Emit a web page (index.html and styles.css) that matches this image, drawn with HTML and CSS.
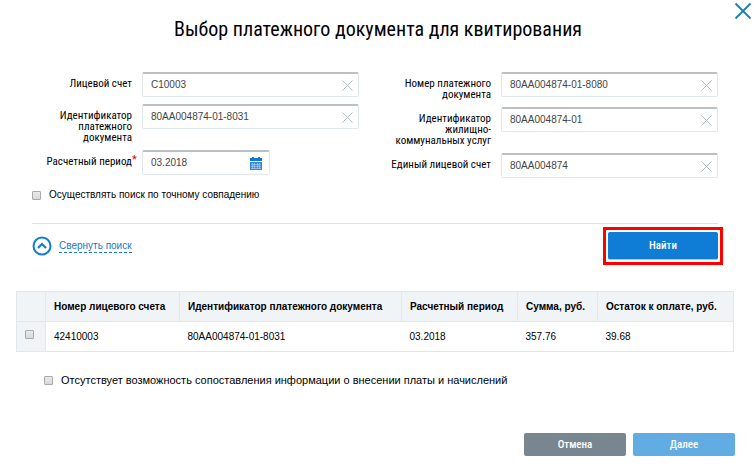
FILE: index.html
```html
<!DOCTYPE html>
<html lang="ru">
<head>
  <meta charset="UTF-8">
  <meta name="viewport" content="width=device-width, initial-scale=1.0">
  <title>Выбор платежного документа для квитирования</title>
  <link rel="stylesheet" href="styles.css">
</head>
<body>
<div class="dialog">
  <header class="dialog-header">
    <h1>Выбор платежного документа для квитирования</h1>
    <button type="button" class="dialog-close" aria-label="Закрыть">
      <svg width="18" height="18" viewBox="0 0 18 18"><path d="M1.500 1.500L16.500 16.500M16.500 1.500L1.500 16.500" stroke="#1b7db5" stroke-width="1.800" fill="none"/></svg>
    </button>
  </header>

  <form class="search">
    <div class="fields">
      <div class="fields-col">
        <div class="field">
          <label for="account">Лицевой счет</label>
          <div class="box">
            <input type="text" id="account" value="C10003">
            <button type="button" class="clear" aria-label="Очистить"><svg width="11" height="11" viewBox="0 0 11 11"><path d="M.5.5l10 10M10.500.5l-10 10"/></svg></button>
          </div>
        </div>
        <div class="field">
          <label for="docId">Идентификатор платежного документа</label>
          <div class="box">
            <input type="text" id="docId" value="80AA004874-01-8031">
            <button type="button" class="clear" aria-label="Очистить"><svg width="11" height="11" viewBox="0 0 11 11"><path d="M.5.5l10 10M10.500.5l-10 10"/></svg></button>
          </div>
        </div>
        <div class="field">
          <label for="period" class="required">Расчетный период</label>
          <div class="box box-date">
            <input type="text" id="period" value="03.2018">
            <button type="button" class="calendar" aria-label="Календарь">
              <svg width="12" height="13" viewBox="0 0 12 13">
                <path d="M0 1h12v3H0zM2 0h2v1H2zM8 0h2v1H8z" fill="#1277cf"/>
                <path d="M0 5h12v8H0z" fill="#2f87d6"/>
                <path d="M1 7.500h10M1 9.500h10M1 11.500h10M2.500 6v6M4.500 6v6M7.500 6v6M9.500 6v6" stroke="#a9cff0" stroke-width=".7"/>
              </svg>
            </button>
          </div>
        </div>
      </div>

      <div class="fields-col">
        <div class="field">
          <label for="docNum">Номер платежного документа</label>
          <div class="box">
            <input type="text" id="docNum" value="80AA004874-01-8080">
            <button type="button" class="clear" aria-label="Очистить"><svg width="11" height="11" viewBox="0 0 11 11"><path d="M.5.5l10 10M10.500.5l-10 10"/></svg></button>
          </div>
        </div>
        <div class="field">
          <label for="serviceId">Идентификатор жилищно-коммунальных услуг</label>
          <div class="box">
            <input type="text" id="serviceId" value="80AA004874-01">
            <button type="button" class="clear" aria-label="Очистить"><svg width="11" height="11" viewBox="0 0 11 11"><path d="M.5.5l10 10M10.500.5l-10 10"/></svg></button>
          </div>
        </div>
        <div class="field">
          <label for="unified">Единый лицевой счет</label>
          <div class="box">
            <input type="text" id="unified" value="80AA004874">
            <button type="button" class="clear" aria-label="Очистить"><svg width="11" height="11" viewBox="0 0 11 11"><path d="M.5.5l10 10M10.500.5l-10 10"/></svg></button>
          </div>
        </div>
      </div>
    </div>

    <div class="exact">
      <input type="checkbox" id="exact">
      <label for="exact">Осуществлять поиск по точному совпадению</label>
    </div>

    <div class="search-footer">
      <a href="#" class="collapse">
        <svg width="20" height="20" viewBox="0 0 20 20" fill="none" stroke="#0f7cd6"><circle cx="10" cy="10" r="8.500" stroke-width="2"/><path d="M6 12l4-4 4 4" stroke-width="2.200"/></svg>
        <span>Свернуть поиск</span>
      </a>
      <div class="highlight">
        <button type="submit" class="btn btn-find">Найти</button>
      </div>
    </div>
  </form>

  <table class="results">
    <colgroup>
      <col class="c-check"><col class="c-account"><col class="c-doc"><col class="c-period"><col class="c-sum"><col class="c-rest">
    </colgroup>
    <thead>
      <tr>
        <th></th>
        <th>Номер лицевого счета</th>
        <th>Идентификатор платежного документа</th>
        <th>Расчетный период</th>
        <th>Сумма, руб.</th>
        <th>Остаток к оплате, руб.</th>
      </tr>
    </thead>
    <tbody>
      <tr>
        <td class="check"><input type="checkbox" aria-label="Выбрать документ"></td>
        <td>42410003</td>
        <td>80AA004874-01-8031</td>
        <td>03.2018</td>
        <td>357.76</td>
        <td>39.68</td>
      </tr>
    </tbody>
  </table>

  <div class="no-match">
    <input type="checkbox" id="noMatch">
    <label for="noMatch">Отсутствует возможность сопоставления информации о внесении платы и начислений</label>
  </div>

  <footer class="actions">
    <button type="button" class="btn btn-cancel">Отмена</button>
    <button type="button" class="btn btn-next">Далее</button>
  </footer>
</div>
</body>
</html>
```
FILE: styles.css
```css
* {
  box-sizing: border-box;
}

body {
  margin: 0;
  background: #fff;
  color: #000;
  font: 10px/12px "Liberation Sans", Arial, sans-serif;
}

button {
  padding: 0;
  border: 0;
  background: none;
  cursor: pointer;
}

svg {
  display: block;
}

input[type="checkbox"] {
  appearance: none;
  flex: none;
  width: 9px;
  height: 9px;
  margin: 0;
  border: 1px solid #a9a9a9;
  border-radius: 1px;
  background: linear-gradient(#e9e9e9, #d9d9d9);
}

input[type="checkbox"]:checked {
  background: #0f7cd6;
}

.dialog-header {
  position: relative;
  padding: 16px 32px 0;
}

h1 {
  margin: 0;
  font: 400 20px/26px "Roboto Condensed", Roboto, sans-serif;
  text-align: center;
}

.dialog-close {
  position: absolute;
  top: 2px;
  right: 4px;
}

/* search form */
.search {
  padding: 30px 38px 0 32px;
}

.fields {
  display: grid;
  grid-template-columns: 1fr 1fr;
  gap: 32px;
}

.fields-col {
  display: flex;
  flex-direction: column;
  gap: 7px;
}

.field {
  display: grid;
  grid-template-columns: 100px 1fr;
  column-gap: 10px;
  align-items: start;
}

.field label {
  padding-top: 6px;
  font: 400 11px/11px "Roboto Condensed", Roboto, sans-serif;
  text-align: right;
}

.required {
  position: relative;
}

.required::after {
  content: "*";
  position: absolute;
  top: 4px;
  left: 100%;
  color: #d0021b;
}

.box {
  display: flex;
  align-items: center;
  height: 25px;
  padding: 0 5px 0 8px;
  border: 1px solid #e1e8ed;
  border-top: 2px solid #bcc0c4;
  border-radius: 2px;
}

.box-date {
  width: 128px;
  padding-right: 7px;
}

.box input {
  flex: 1;
  min-width: 0;
  padding: 0;
  border: 0;
  outline: 0;
  background: none;
  color: #444;
  font: inherit;
}

.clear path {
  fill: none;
  stroke: #b4bcc5;
}

.exact {
  display: flex;
  align-items: center;
  gap: 8px;
  margin-top: 11px;
  padding-bottom: 22px;
  border-bottom: 1px solid #dfe2e4;
}

.search-footer {
  display: flex;
  align-items: center;
  justify-content: space-between;
  padding-top: 3px;
}

.collapse {
  display: flex;
  align-items: center;
  gap: 7px;
  color: #1a75c9;
  text-decoration: none;
}

.collapse span {
  border-bottom: 1px dashed #1a75c9;
}

.btn {
  width: 102px;
  height: 23px;
  border-radius: 2px;
  color: #fff;
  font: 500 11px/14px "Roboto Condensed", Roboto, sans-serif;
}

/* red frame around the search button */
.highlight {
  display: flex;
  margin-right: -5px;
  padding: 2px;
  border: 3px solid #f00;
}

.btn-find {
  width: 110px;
  height: 28px;
  border-bottom: 1px solid #b5c6d5;
  background: #0f7cd6;
}

/* found documents */
.results {
  width: calc(100% - 38px);
  margin: 26px 22px 0 16px;
  border-collapse: collapse;
  table-layout: fixed;
}

.results th,
.results td {
  height: 30px;
  padding: 0 8px;
  border: 1px solid #e1e8ed;
  text-align: left;
  white-space: nowrap;
}

.results th {
  background: #f0f4f7;
}

.results td {
  border-left: 0;
  border-right: 0;
}

.results td:last-child {
  border-right: 1px solid #e1e8ed;
}

.results .check {
  padding: 0 8px 4px;
  border: 1px solid #e1e8ed;
  background: #f0f4f7;
}

.check input {
  display: block;
}

.c-check { width: 29px; }
.c-account { width: 134px; }
.c-doc { width: 222px; }
.c-period { width: 116px; }
.c-sum { width: 80px; }

.no-match {
  display: flex;
  align-items: center;
  gap: 8px;
  margin: 21px 44px 0;
  font-size: 11px;
  line-height: 14px;
}

.actions {
  display: flex;
  justify-content: flex-end;
  gap: 7px;
  padding: 46px 21px 14px;
}

.btn-cancel {
  background: #78868f;
}

.btn-next {
  background: #62ace4;
}
```
